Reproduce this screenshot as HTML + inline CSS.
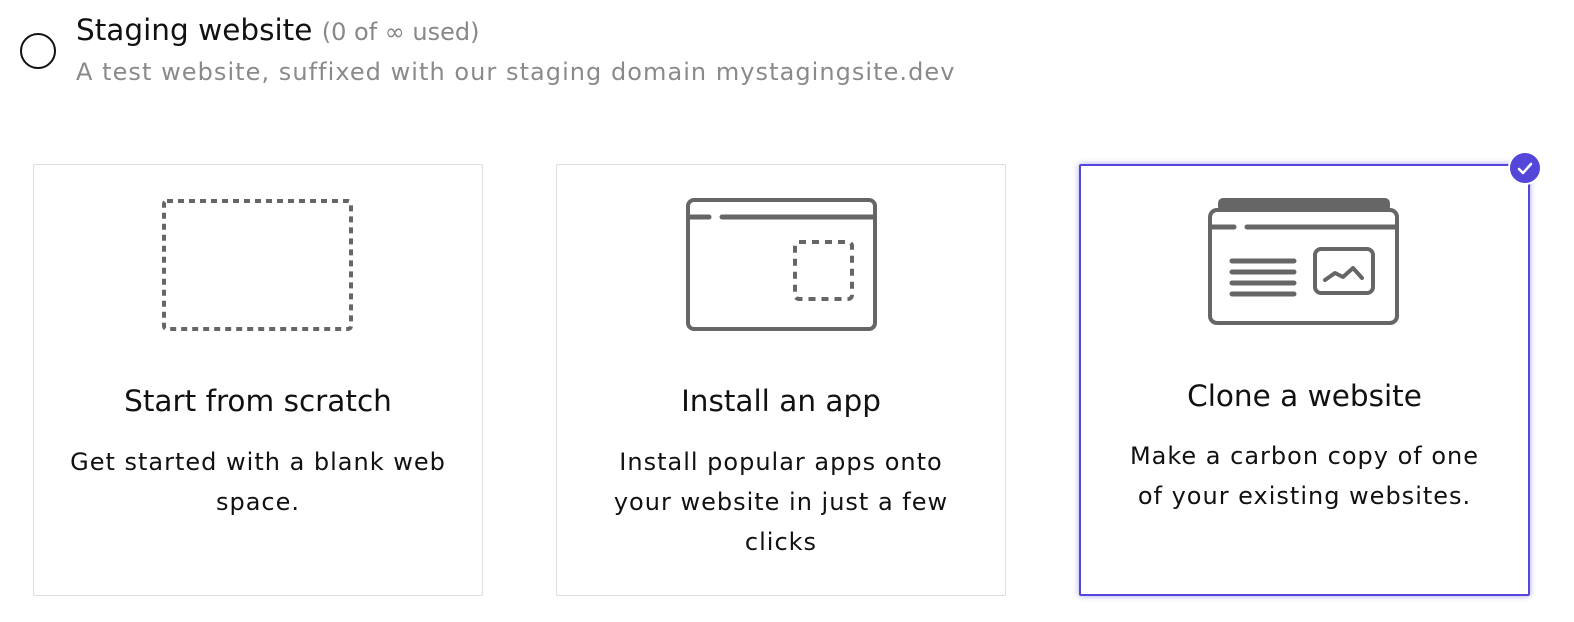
<!DOCTYPE html>
<html><head><meta charset="utf-8"><style>
body{margin:0;width:1574px;height:622px;background:#fff;font-family:"DejaVu Sans","Liberation Sans",sans-serif;position:relative;overflow:hidden;color:#111}
.abs{position:absolute}
.card{position:absolute;top:164px;width:448px;height:430px;border:1px solid #ddd;border-radius:2px;box-sizing:border-box}
.t{position:absolute;text-align:center;white-space:nowrap}
.ti{font-size:29.5px}
.de{font-size:24px;line-height:40px;letter-spacing:1px}
</style></head><body>
<div class="abs" style="left:20px;top:33px;width:36px;height:36px;border:2px solid #111;border-radius:50%;box-sizing:border-box"></div>
<div class="abs" style="left:76px;top:13px;font-size:29.5px;white-space:nowrap">Staging website <span style="font-size:24px;color:#888">(0 of ∞ used)</span></div>
<div class="abs" style="left:76px;top:58px;font-size:24px;letter-spacing:1.05px;color:#8a8a8a;white-space:nowrap">A test website, suffixed with our staging domain mystagingsite.dev</div>

<div class="card" style="left:33px;width:450px;height:432px">
<svg class="abs" style="left:0;top:0" width="450" height="200"><rect x="130" y="36" width="187" height="128" rx="3" fill="none" stroke="#666" stroke-width="4" stroke-dasharray="6 5"/></svg>
</div>
<div class="abs t ti" style="left:33px;width:450px;top:384px">Start from scratch</div>
<div class="abs t de" style="left:33px;width:450px;top:442px">Get started with a blank web<br>space.</div>

<div class="card" style="left:556px;width:450px;height:432px">
<svg class="abs" style="left:0;top:0" width="450" height="200"><rect x="131" y="35" width="187" height="129" rx="6" fill="none" stroke="#666" stroke-width="4"/><line x1="133" y1="52" x2="152" y2="52" stroke="#666" stroke-width="5" stroke-linecap="round"/><line x1="165" y1="52" x2="316" y2="52" stroke="#666" stroke-width="5" stroke-linecap="round"/><rect x="238" y="77" width="57" height="57" rx="4" fill="none" stroke="#666" stroke-width="4" stroke-dasharray="7 6"/></svg>
</div>
<div class="abs t ti" style="left:556px;width:450px;top:384px">Install an app</div>
<div class="abs t de" style="left:556px;width:450px;top:442px">Install popular apps onto<br>your website in just a few<br>clicks</div>

<div class="card" style="left:1079px;width:451px;height:432px;border:2px solid #5446d8;box-shadow:0 0 6px rgba(84,70,216,.5)">
<svg class="abs" style="left:-2px;top:-2px" width="451" height="200"><rect x="139" y="34" width="172" height="14" rx="5" fill="#666"/><rect x="131" y="46" width="187" height="113" rx="7" fill="#fff" stroke="#666" stroke-width="4"/><line x1="133" y1="63" x2="155" y2="63" stroke="#666" stroke-width="5" stroke-linecap="round"/><line x1="168" y1="63" x2="316" y2="63" stroke="#666" stroke-width="5" stroke-linecap="round"/><g stroke="#666" stroke-width="5" stroke-linecap="round"><line x1="153" y1="97" x2="215" y2="97"/><line x1="153" y1="108" x2="215" y2="108"/><line x1="153" y1="119" x2="215" y2="119"/><line x1="153" y1="130" x2="215" y2="130"/></g><rect x="236" y="85" width="58" height="44" rx="6" fill="none" stroke="#666" stroke-width="4"/><polyline points="246,116 256,109 264,113 274,104 283,114" fill="none" stroke="#666" stroke-width="4" stroke-linecap="round" stroke-linejoin="round"/></svg>
</div>
<div class="abs t ti" style="left:1079px;width:451px;top:379px">Clone a website</div>
<div class="abs t de" style="left:1079px;width:451px;top:436px">Make a carbon copy of one<br>of your existing websites.</div>
<div class="abs" style="left:1508px;top:151px;width:34px;height:34px;border-radius:50%;background:#5446d8;border:2px solid #fff;box-sizing:border-box">
<svg width="30" height="30" style="position:absolute;left:0;top:0"><polyline points="9,16 13,20 21,11" fill="none" stroke="#fff" stroke-width="2.5" stroke-linecap="round" stroke-linejoin="round"/></svg></div>
</body></html>
